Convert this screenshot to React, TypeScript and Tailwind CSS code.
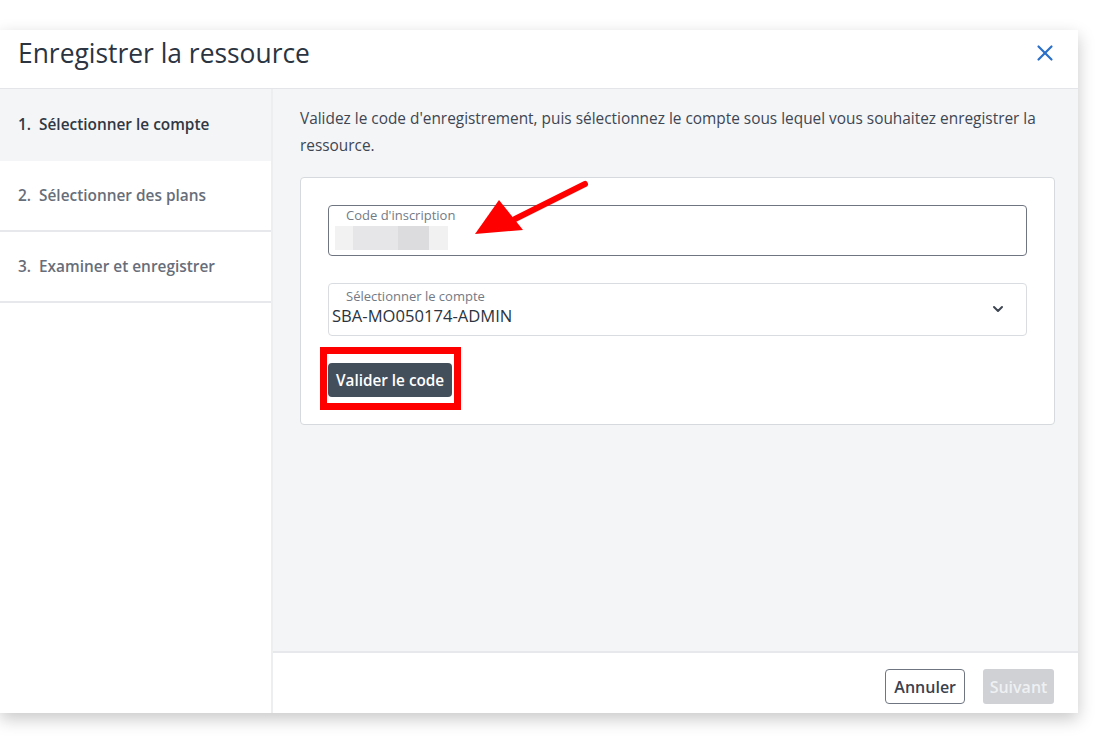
import { X, ChevronDown } from "lucide-react";

const steps = [
  { id: "1", label: "Sélectionner le compte", active: true },
  { id: "2", label: "Sélectionner des plans", active: false },
  { id: "3", label: "Examiner et enregistrer", active: false },
];

export default function App() {
  return (
    <div
      className="w-[1108px] h-[743px] bg-white pt-[30px] overflow-hidden"
      style={{ fontFamily: '"Open Sans", "Noto Sans", sans-serif' }}
    >
      <div className="w-[1078px] h-[683px] bg-white flex flex-col shadow-[0_6px_16px_rgba(0,0,0,0.22)]">
        {/* Header */}
        <div className="h-[59px] shrink-0 flex items-center justify-between pl-[18px] pr-[20px] pb-[13px] border-b border-[#e3e5e8]">
          <h1 className="text-[26.4px] leading-[34px] text-[#2b3440] font-normal">Enregistrer la ressource</h1>
          <X className="w-[26px] h-[26px] text-[#2a6fc9]" strokeWidth={2} />
        </div>

        <div className="flex flex-1 min-h-0">
          {/* Steps */}
          <div className="w-[273px] shrink-0 border-r-2 border-[#eceef0] flex flex-col">
            {steps.map((s) => (
              <div
                key={s.id}
                className={
                  s.active
                    ? "h-[72px] flex items-center pl-[18px] bg-[#f4f5f7] text-[#303844] text-[15.4px] font-semibold"
                    : "h-[71px] flex items-center pl-[18px] border-b-2 border-[#e6e8eb] text-[#676e79] text-[15.4px] font-semibold"
                }
              >
                <span className="mr-[8px]">{s.id}.</span>
                {s.label}
              </div>
            ))}
          </div>

          {/* Content */}
          <div className="flex-1 flex flex-col">
            <div className="flex-1 bg-[#f4f5f7] pl-[27px] pr-[20px] pt-[16px]">
              <p className="text-[15.4px] leading-[27px] text-[#3e4652]">
                Validez le code d'enregistrement, puis sélectionnez le compte sous lequel vous souhaitez enregistrer la ressource.
              </p>

              <div className="relative mt-[18px] mr-[3px] bg-white border border-[#d6d9dd] rounded-[4px] px-[27px] pt-[27px] pb-[27px]">
                {/* Code input */}
                <div className="h-[51px] border-[1.5px] border-[#6f7681] rounded-[4px] px-[6px]">
                  <div className="text-[13px] leading-[18px] text-[#737a85] pl-[11px]">Code d'inscription</div>
                  <div className="flex h-[24px] mt-[2px]">
                    <div className="w-[18px] bg-[#f2f2f3]" />
                    <div className="w-[45px] bg-[#e6e6e8]" />
                    <div className="w-[31px] bg-[#dcdcdf]" />
                    <div className="w-[19px] bg-[#f1f1f2]" />
                  </div>
                </div>

                {/* Select */}
                <div className="mt-[27px] h-[53px] border border-[#d9dce0] rounded-[4px] pl-[3px] pr-[20px] flex items-start justify-between">
                  <div className="pt-[3px]">
                    <div className="text-[13px] leading-[18px] text-[#737a85] pl-[14px]">Sélectionner le compte</div>
                    <div className="text-[16.6px] leading-[22px] text-[#2b3440]">SBA-MO050174-ADMIN</div>
                  </div>
                  <ChevronDown className="w-[16px] h-[16px] mt-[17px] text-[#3e4652]" strokeWidth={3} />
                </div>

                {/* Validate button with annotation box */}
                <div className="mt-[27px] relative w-fit">
                  <button className="h-[34px] px-[8px] rounded-[4px] bg-[#444f5c] text-white text-[15.3px] font-semibold">
                    Valider le code
                  </button>
                  <div className="absolute left-[-8px] right-[-9px] top-[-16px] bottom-[-13px] border-[7px] border-[#ff0000]" />
                </div>

                {/* Red arrow annotation */}
                <svg className="absolute left-[170px] top-[0px]" width="120" height="64" viewBox="0 0 120 64">
                  <line x1="114" y1="6" x2="44" y2="41" stroke="#f00" strokeWidth="6" strokeLinecap="round" />
                  <polygon points="4,56 28,22 52,52" fill="#f00" />
                </svg>
              </div>
            </div>

            {/* Footer */}
            <div className="h-[62px] shrink-0 border-t-2 border-[#e6e8eb] bg-white flex justify-end items-start pt-[16px] pr-[24px] gap-[18px]">
              <button className="h-[35px] px-[8px] border-[1.5px] border-[#6f7681] rounded-[4px] text-[16px] font-semibold text-[#3a4250]">
                Annuler
              </button>
              <button className="h-[35px] w-[71px] rounded-[3px] bg-[#cfd1d5] text-[16px] font-semibold text-[#eef0f2]">
                Suivant
              </button>
            </div>
          </div>
        </div>
      </div>
    </div>
  );
}
